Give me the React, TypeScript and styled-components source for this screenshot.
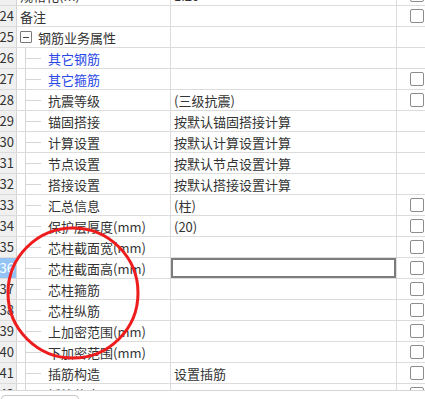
import React from 'react';
import styled, { createGlobalStyle } from 'styled-components';

const GlobalStyle = createGlobalStyle`
  html, body {
    margin: 0;
    padding: 0;
    background: #ffffff;
  }
  body {
    font-family: "Noto Sans CJK SC", "Noto Sans", sans-serif;
  }
`;

const Page = styled.div`
  position: relative;
  width: 425px;
  height: 399px;
  overflow: hidden;
  display: flex;
  flex-direction: column;
  background: #fff;
`;

const GridArea = styled.div`
  height: 390px;
  overflow: hidden;
  flex: none;
`;

const Grid = styled.div`
  margin-top: -15px;
  width: 440px;
`;

const Row = styled.div`
  display: grid;
  grid-template-columns: 17px 154px 226px 43px;
  height: 21px;
  box-sizing: border-box;
  border-bottom: 1px solid #dcdcdc;
`;

const NumCell = styled.div<{ $active?: boolean }>`
  box-sizing: border-box;
  border-right: 1px solid #d4d4d4;
  background: ${(p) => (p.$active ? '#94c4f5' : '#f0f0f0')};
  color: ${(p) => (p.$active ? '#ffffff' : '#333333')};
  font-size: 13px;
  line-height: 20px;
  text-align: right;
  padding-right: 2px;
  white-space: nowrap;
  overflow: hidden;
  direction: rtl;
`;

const NameCell = styled.div<{ $blue?: boolean }>`
  box-sizing: border-box;
  border-right: 1px solid #dcdcdc;
  display: flex;
  align-items: center;
  font-size: 13px;
  color: ${(p) => (p.$blue ? '#2848e6' : '#333333')};
  white-space: nowrap;
  overflow: hidden;
`;

const PlainLabel = styled.span`
  padding-left: 3px;
`;

const Connector = styled.span`
  position: relative;
  flex: none;
  width: 31px;
  height: 20px;
  &::before {
    content: '';
    position: absolute;
    left: 8px;
    top: 0;
    bottom: 0;
    border-left: 1px solid #d6d6d6;
  }
  &::after {
    content: '';
    position: absolute;
    left: 9px;
    width: 15px;
    top: 10px;
    border-top: 1px solid #d6d6d6;
  }
`;

const Toggle = styled.span`
  flex: none;
  box-sizing: border-box;
  width: 12px;
  height: 12px;
  margin-left: 3px;
  margin-right: 6px;
  border: 1px solid #7a7a7a;
  border-radius: 1px;
  display: flex;
  align-items: center;
  justify-content: center;
  &::after {
    content: '';
    width: 6px;
    border-top: 1px solid #444;
  }
`;

const ValueCell = styled.div<{ $selected?: boolean }>`
  box-sizing: border-box;
  border-right: 1px solid #dcdcdc;
  display: flex;
  align-items: center;
  padding-left: 3px;
  font-size: 13px;
  color: #333333;
  white-space: nowrap;
  overflow: hidden;
  box-shadow: ${(p) => (p.$selected ? 'inset 0 0 0 2px #7c7c7c' : 'none')};
`;

const CheckCell = styled.div`
  display: flex;
  align-items: center;
  padding-left: 13px;
`;

const Box = styled.span`
  box-sizing: border-box;
  width: 14px;
  height: 14px;
  border: 1.5px solid #8c8c8c;
  border-radius: 2px;
  background: #fff;
`;

const Footer = styled.div`
  flex: 1;
  border-top: 1px solid #d6d6d6;
  background: #fff;
  padding: 4px 0 0 1px;
`;

const Tab = styled.div`
  width: 78px;
  height: 20px;
  box-sizing: border-box;
  border: 1px solid #c8c8c8;
  border-radius: 4px;
  background: #fff;
`;

const Mark = styled.svg`
  position: absolute;
  left: 0;
  top: 0;
  pointer-events: none;
`;

type Item = {
  n: number;
  name: string;
  value?: string;
  kind: 'plain' | 'group' | 'child';
  blue?: boolean;
  check?: boolean;
  selected?: boolean;
};

const rows: Item[] = [
  { n: 23, name: '规格化(m)', value: '1.20', kind: 'plain', check: true },
  { n: 24, name: '备注', kind: 'plain', check: true },
  { n: 25, name: '钢筋业务属性', kind: 'group' },
  { n: 26, name: '其它钢筋', kind: 'child', blue: true },
  { n: 27, name: '其它箍筋', kind: 'child', blue: true, check: true },
  { n: 28, name: '抗震等级', value: '(三级抗震)', kind: 'child', check: true },
  { n: 29, name: '锚固搭接', value: '按默认锚固搭接计算', kind: 'child' },
  { n: 30, name: '计算设置', value: '按默认计算设置计算', kind: 'child' },
  { n: 31, name: '节点设置', value: '按默认节点设置计算', kind: 'child' },
  { n: 32, name: '搭接设置', value: '按默认搭接设置计算', kind: 'child' },
  { n: 33, name: '汇总信息', value: '(柱)', kind: 'child', check: true },
  { n: 34, name: '保护层厚度(mm)', value: '(20)', kind: 'child', check: true },
  { n: 35, name: '芯柱截面宽(mm)', kind: 'child', check: true },
  { n: 36, name: '芯柱截面高(mm)', kind: 'child', check: true, selected: true },
  { n: 37, name: '芯柱箍筋', kind: 'child', check: true },
  { n: 38, name: '芯柱纵筋', kind: 'child', check: true },
  { n: 39, name: '上加密范围(mm)', kind: 'child', check: true },
  { n: 40, name: '下加密范围(mm)', kind: 'child', check: true },
  { n: 41, name: '插筋构造', value: '设置插筋', kind: 'child', check: true },
  { n: 42, name: '插筋信息', kind: 'child', check: true },
];

const App = () => {
  return (
    <>
      <GlobalStyle />
      <Page>
        <GridArea>
          <Grid>
            {rows.map((r) => (
              <Row key={r.n}>
                <NumCell $active={r.selected}>{r.n}</NumCell>
                <NameCell $blue={r.blue}>
                  {r.kind === 'plain' && <PlainLabel>{r.name}</PlainLabel>}
                  {r.kind === 'group' && (
                    <>
                      <Toggle />
                      <span>{r.name}</span>
                    </>
                  )}
                  {r.kind === 'child' && (
                    <>
                      <Connector />
                      <span>{r.name}</span>
                    </>
                  )}
                </NameCell>
                <ValueCell $selected={r.selected}>{r.value}</ValueCell>
                <CheckCell>{r.check && <Box />}</CheckCell>
              </Row>
            ))}
          </Grid>
        </GridArea>
        <Footer>
          <Tab />
        </Footer>
        <Mark width="425" height="399" viewBox="0 0 425 399">
          <ellipse cx="73" cy="293" rx="65" ry="65" fill="none" stroke="#ee1c1c" strokeWidth="3" />
        </Mark>
      </Page>
    </>
  );
};

export default App;
